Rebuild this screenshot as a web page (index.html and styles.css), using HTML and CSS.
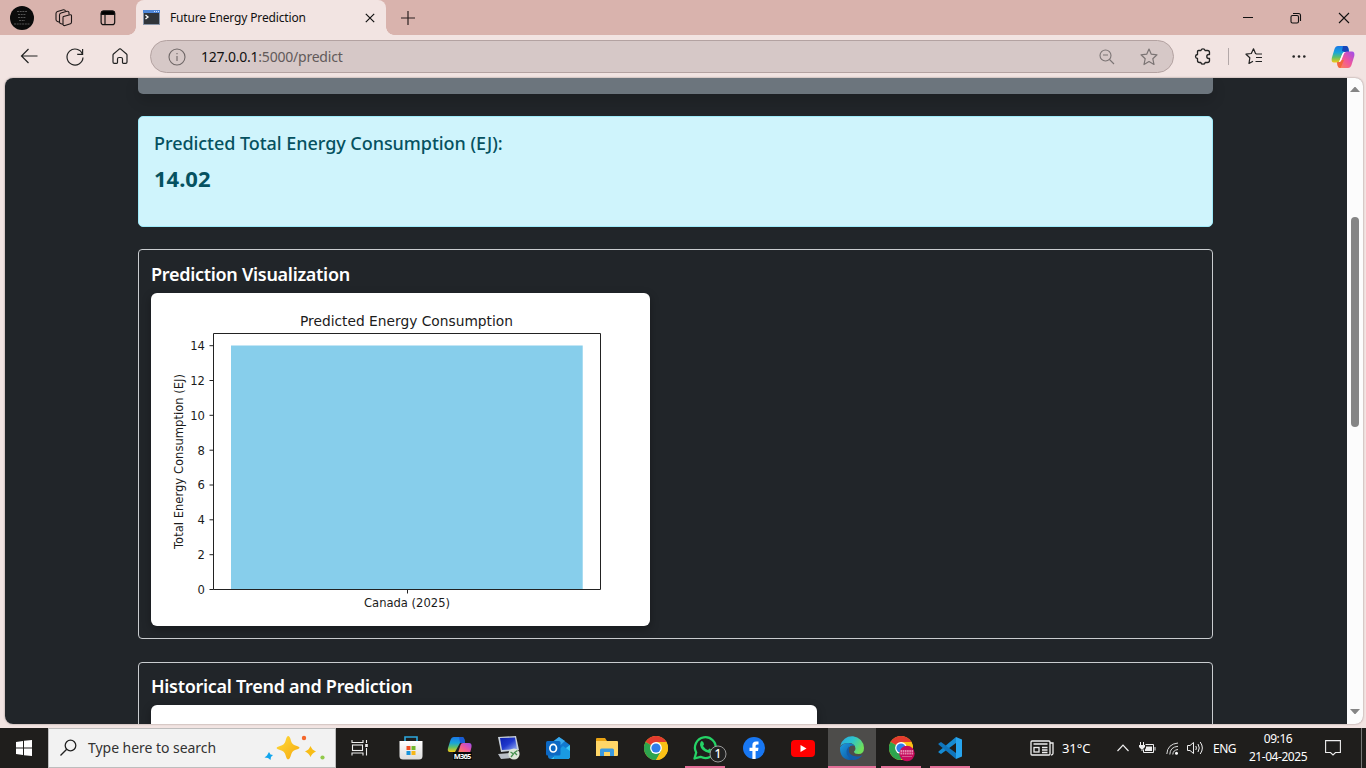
FILE: index.html
```html
<!DOCTYPE html>
<html lang="en">
<head>
<meta charset="utf-8">
<title>Future Energy Prediction</title>
<link rel="stylesheet" href="styles.css">
</head>
<body>
<svg class="defs" width="0" height="0">
  <defs>
    <linearGradient id="cpA" x1="0" y1="0" x2="0" y2="1"><stop offset="0" stop-color="#1b78e8"/><stop offset=".4" stop-color="#18a5d8"/><stop offset=".68" stop-color="#5fc06a"/><stop offset="1" stop-color="#f5c911"/></linearGradient>
    <linearGradient id="cpB" x1="1" y1="0" x2="0" y2="1"><stop offset="0" stop-color="#9a4df0"/><stop offset=".5" stop-color="#f0569c"/><stop offset="1" stop-color="#ff8a4a"/></linearGradient>
    <linearGradient id="edA" x1="0" y1="0" x2="1" y2=".5"><stop offset="0" stop-color="#2aa8e0"/><stop offset=".5" stop-color="#2cc3cf"/><stop offset="1" stop-color="#6fe05a"/></linearGradient>
    <linearGradient id="edB" x1="0" y1="0" x2="1" y2="1"><stop offset="0" stop-color="#1c9ce0"/><stop offset="1" stop-color="#0c4f9c"/></linearGradient>
    <linearGradient id="gold" x1="0" y1="0" x2="1" y2="1"><stop offset="0" stop-color="#ffdc3c"/><stop offset="1" stop-color="#f5a80c"/></linearGradient>
    <linearGradient id="bag" x1="0" y1="0" x2="0" y2="1"><stop offset="0" stop-color="#fff"/><stop offset="1" stop-color="#dcdcdc"/></linearGradient>
    <linearGradient id="pc" x1="0" y1="0" x2="1" y2="1"><stop offset="0" stop-color="#0b1fae"/><stop offset=".5" stop-color="#2038cc"/><stop offset="1" stop-color="#9cb6f4"/></linearGradient>
    <symbol id="chrome" viewBox="0 0 24 24">
      <circle cx="12" cy="12" r="12" fill="#fbc116"/>
      <path d="M12 12 1.600 6A12 12 0 0 1 22.400 6Z" fill="#e33b2e"/>
      <path d="M12 12 1.600 6A12 12 0 0 0 12 24L17.200 15Z" fill="#2da44e"/>
      <path d="M12 6H22.400A12 12 0 0 1 12 24L17.200 15Z" fill="#fbc116"/>
      <circle cx="12" cy="12" r="5.900" fill="#fff"/><circle cx="12" cy="12" r="4.600" fill="#2f7de9"/>
    </symbol>
  </defs>
</svg>
<div class="screen">
  <header class="titlebar">
    <div class="avatar"><svg width="24" height="24"><circle cx="12" cy="12" r="12" fill="#0b0b0b"/><g stroke="#9a9a9a" stroke-width="1" stroke-dasharray="2 .7"><path d="M7 5.500H17M8 8.500H16M8 11.500H16M9 14.500H15M4 18H20" opacity=".5"/></g></svg></div>
    <div class="tb-icon workspaces"><svg width="18" height="18" fill="none" stroke="#1d1717" stroke-width="1.100" stroke-linejoin="round"><path d="M8.500 7.500 15 5.700Q16.500 5.500 16.500 7V13Q16.500 14.500 15.500 14.800L10 16.500Q8 17 8 15V8.500Q8 7.700 8.500 7.500Z"/><path d="M8 15.300 6 14.700Q4.500 14.500 4.500 13V6Q4.500 4.500 6 4L12 2.300Q14 2 14 4V5.500"/><path d="M4.500 13.200 2.500 12.500Q1 12 1 10.500V4.500Q1 3 2.500 2.500L8.500.7Q10 .5 10.500 2.200"/></svg></div>
    <div class="tb-icon verticals"><svg width="16" height="16" fill="none" stroke="#111" stroke-width="1.200"><rect x="1.100" y="1.100" width="13.600" height="13.600" rx="2.500"/><path d="M1.500 4.500V3Q1.500 1 3.500 1H12.500Q14.500 1 14.500 3V4.500Z" fill="#000"/><path d="M5 5V14.500"/></svg></div>
    <div class="tab">
      <svg class="favicon" width="17" height="15"><rect width="17" height="15" fill="#8995a8"/><rect width="17" height="3" fill="#4f87d8"/><path d="M11 1.500H16" stroke="#d6e6ff" stroke-dasharray="1 1"/><rect x="1" y="3" width="15" height="11" fill="#30353b"/><path d="M2.500 5 5 7 2.500 9" fill="none" stroke="#fff" stroke-width="1.300"/></svg>
      <span class="tab-title">Future Energy Prediction</span>
      <svg class="tab-close" width="10" height="10" stroke="#111" stroke-width="1.200"><path d="M.8.8 9.200 9.200M9.200.8.8 9.200"/></svg>
    </div>
    <svg class="newtab" width="14" height="14" stroke="#2a2020" stroke-width="1.200"><path d="M7 0V14M0 7H14"/></svg>
    <div class="winctl">
      <svg width="48" height="35" stroke="#111"><path d="M20 17.500H30"/></svg>
      <svg width="48" height="35" fill="none" stroke="#111" stroke-width="1.100"><rect x="20" y="15.500" width="7.500" height="7.500" rx="1.500"/><path d="M22 13.500H27.500Q29.500 13.500 29.500 15.500V21"/></svg>
      <svg width="48" height="35" stroke="#111" stroke-width="1.100"><path d="M20 13 30 23M30 13 20 23"/></svg>
    </div>
  </header>
  <nav class="toolbar">
    <div class="cell46"><svg width="18" height="16" fill="none" stroke="#222" stroke-width="1.200"><path d="M17.500 7H1.500M8.500 0 1.500 7 8.500 14"/></svg></div>
    <div class="cell46"><svg width="18" height="18" fill="none" stroke="#222" stroke-width="1.200"><path d="M16.500 6.200A8 8 0 1 0 17 9.500M16.600 1V6.300H11.200"/></svg></div>
    <div class="cell44"><svg width="16" height="17" fill="none" stroke="#222" stroke-width="1.200" stroke-linejoin="round"><path d="M1 7.100Q1 6.500 1.500 6L7.200 1.100Q8 .5 8.800 1.100L14.500 6Q15 6.500 15 7.100V14Q15 15.300 13.700 15.300H11.300Q10.500 15.300 10.500 14.500V11Q10.500 9.500 9 9.500H7Q5.500 9.500 5.500 11V14.500Q5.500 15.300 4.700 15.300H2.300Q1 15.300 1 14Z"/></svg></div>
    <div class="pill">
      <svg class="info" width="18" height="18" fill="none" stroke="#6f6767" stroke-width="1.100"><circle cx="9" cy="9" r="8"/><path d="M9 8V13M9 5V6.300"/></svg>
      <span class="url"><b>127.0.0.1</b>:5000/predict</span>
      <svg class="zoomout" width="16" height="16" fill="none" stroke="#7b7474" stroke-width="1.100"><circle cx="6.500" cy="6.500" r="5.500"/><path d="M4 6H9M10.500 10.500 15 15"/></svg>
      <svg class="star" width="18" height="18" fill="none" stroke="#7b7474" stroke-width="1.200" stroke-linejoin="round"><path d="M9 1 11.300 6.200 17 6.800 12.800 10.700 14 16.500 9 13.600 4 16.500 5.200 10.700 1 6.800 6.700 6.200Z"/></svg>
    </div>
    <div class="cell30 ext"><svg width="18" height="18" fill="none" stroke="#222" stroke-width="1.300" stroke-linejoin="round"><path d="M4.500 2.500H7Q7.300.8 9 .8T11 2.500H13.500Q15.500 2.500 15.500 4.500V6.500H14.700Q12.800 6.500 12.800 8.500T14.700 10.500H15.500V12.500Q15.500 14.500 13.500 14.500H11.200Q10.800 16.200 9 16.200T6.800 14.500H5.500Q3.500 14.500 3.500 12.500V10.500Q1.500 10.200 1.500 8.500T3.500 6.500V3.500Q3.500 2.500 4.500 2.500Z"/></svg></div>
    <i class="sep"></i>
    <div class="cell30 fav"><svg width="19" height="18" fill="none" stroke="#222" stroke-width="1.200" stroke-linejoin="round"><path d="M11.500 6 10.500 5.500 8.500 .8 6.300 5.500 1 6.200 4.800 9.800 4 15.500 8 13.300M11 6H17M11 9.500H17M10.500 13.500H17"/></svg></div>
    <div class="cell30 dots"><svg width="14" height="4" fill="#222"><circle cx="1.700" cy="1.500" r="1.300"/><circle cx="7" cy="1.500" r="1.300"/><circle cx="12.300" cy="1.500" r="1.300"/></svg></div>
    <div class="cell30 copilot"><svg width="24" height="22" viewBox="0 0 24 22"><path d="M7 0H15Q17 0 17.500 3L18 6H14Q12 6 11.300 8L8.500 15Q8 16.500 6 16.500H3Q0 16.500.8 12L3.500 3Q4.500 0 7 0Z" fill="url(#cpA)"/><path d="M12 0H15Q17 0 17.500 3L18 6H14L11 5Z" fill="#1645b8"/><path d="M17 22H9Q7 22 6.500 19L6 16Q9 17 10 14L12.800 7Q13.500 5.500 16 5.500H21Q24 5.500 23.300 10L20.500 19Q19.500 22 17 22Z" fill="url(#cpB)"/><path d="M6 16Q9 17 10 14L13 14 9.500 22Q7 22 6.500 19Z" fill="#f2663c"/><path d="M11.300 8Q12 6 14 6H15Q13.300 6.500 12.800 8L10.500 14Q10 16 8 16Z" fill="#fff"/></svg></div>
  </nav>
  <main class="viewport">
    <div class="page">
      <div class="container">
        <div class="form-card"></div>
        <div class="alert">
          <h4 class="alert-title">Predicted Total Energy Consumption (EJ):</h4>
          <p class="value">14.02</p>
        </div>
        <section class="panel first">
          <h5 class="heading">Prediction Visualization</h5>
          <svg class="plot" width="499" height="333" viewBox="151 293 499 333">
            <rect x="231" y="345.500" width="351.700" height="244.500" fill="#87ceeb"/>
            <path d="M213.500 333.500H600.500V589.500H213.500ZM209.500 589.500H213.500M209.500 554.700H213.500M209.500 519.800H213.500M209.500 485H213.500M209.500 450.200H213.500M209.500 415.300H213.500M209.500 380.500H213.500M209.500 345.700H213.500M407.500 589.500V593.500" fill="none" stroke="#222" stroke-width="1"/>
            <g class="ticks">
              <text x="205" y="594">0</text><text x="205" y="559">2</text><text x="205" y="524">4</text><text x="205" y="489">6</text><text x="205" y="454.500">8</text><text x="205" y="419.500">10</text><text x="205" y="384.500">12</text><text x="205" y="350">14</text>
            </g>
            <text class="mid" x="407" y="607" textLength="86" lengthAdjust="spacingAndGlyphs">Canada (2025)</text>
            <text class="plot-title" x="406.500" y="326" textLength="213" lengthAdjust="spacingAndGlyphs">Predicted Energy Consumption</text>
            <text class="mid" transform="translate(182.500 461.500) rotate(-90)" textLength="175" lengthAdjust="spacingAndGlyphs">Total Energy Consumption (EJ)</text>
          </svg>
        </section>
        <section class="panel second">
          <h5 class="heading">Historical Trend and Prediction</h5>
          <div class="plot-next"></div>
        </section>
      </div>
    </div>
    <div class="scrollbar"><svg width="10" height="6"><path d="M0 6 4.500 1H5.500L10 6Z" fill="#858585"/></svg><i class="thumb"></i><svg class="down" width="10" height="6"><path d="M0 0 4.500 5H5.500L10 0Z" fill="#858585"/></svg></div>
  </main>
  <footer class="taskbar">
    <div class="start"><svg width="16" height="16" fill="#fff"><path d="M0 2 7 1V7.500H0ZM8 .8 16 0V7.500H8ZM0 8.500H7V15L0 14ZM8 8.500H16V16L8 15.200Z"/></svg></div>
    <div class="search">
      <svg width="18" height="18" fill="none" stroke="#222" stroke-width="1.300"><circle cx="10.500" cy="6.500" r="5.300"/><path d="M6.700 10.300.5 16.500"/></svg>
      <span class="search-text">Type here to search</span>
      <svg class="sparkles" width="62" height="26"><path d="M24 1Q26 1 27 6Q28 10 33 11Q36 12 35.500 13Q35 14 31 15Q28 16 27 20Q26 24 24 24.500Q22.500 24 21.500 20Q20.500 16 16 15Q12.500 14 12.500 13Q12.500 12 16 11Q20.500 10 21.500 6Q22.500 1.500 24 1Z" fill="url(#gold)"/><path d="M46.500 11Q48 15 52 16.500Q48 18 46.500 22Q45 18 41 16.500Q45 15 46.500 11Z" fill="#f8bd16"/><path d="M5 17 6.500 19.500 9 20 7 22 6.500 25 4 23 .5 22.500 3 20.500Z" fill="#12a5ed"/><circle cx="40" cy="3" r="2.200" fill="#f4672b"/><circle cx="58.500" cy="22.500" r="2.100" fill="#91c94a"/></svg>
    </div>
    <div class="task"><svg width="18" height="16" fill="none" stroke="#eee" stroke-width="1.100"><path d="M1 0V2.500H12V0M1 15.500V13H12V15.500M15.500 0V3M15.500 8V15.500"/><rect x="1.500" y="5" width="10" height="5.500"/><rect x="14.200" y="4" width="2.600" height="3" fill="#eee" stroke="none"/></svg></div>
    <div class="apps">
      <div class="app"><svg width="24" height="24"><path d="M6 6V1H18V6" fill="none" stroke="#2da8dd" stroke-width="1.600"/><path d="M.5 5H23.500V20Q23.500 23.500 20 23.500H4Q.5 23.500.5 20Z" fill="url(#bag)"/><path d="M7.500 10H11.500V14H7.500Z" fill="#f04e23"/><path d="M12.500 10H16.500V14H12.500Z" fill="#71b72c"/><path d="M7.500 15H11.500V19H7.500Z" fill="#1793db"/><path d="M12.500 15H16.500V19H12.500Z" fill="#f7b718"/></svg></div>
      <div class="app"><svg width="26" height="24"><path d="M7 1H15Q17 1 17.500 4L18 7H13L8 16H3Q0 16 1 12L3.500 4Q4.500 1 7 1Z" fill="url(#cpA)"/><path d="M12 1H15Q17 1 17.500 4L18 7H13Z" fill="#195bd5"/><path d="M16 7H22Q25 7 24.500 11L23 17H11L13.500 9Q14 7 16 7Z" fill="url(#cpB)"/><rect x="6" y="16" width="19" height="8" fill="#080808"/><text class="m365" x="6.700" y="22.500" textLength="17.500">M365</text></svg></div>
      <div class="app"><svg width="24" height="24"><path d="M1 18 13 17 18 19 15 22 4 23Z" fill="#b9bec5"/><path d="M1 1 19 0 22 14 4 16Z" fill="#c8d0da"/><path d="M3 2 18 1.500 20 13 5 14Z" fill="url(#pc)"/><circle cx="17" cy="18" r="5.600" fill="#dde7d9"/><path d="M13.500 16 16.500 18 14 21M20.500 14.500 17.500 16.500 20 19" fill="none" stroke="#45904e" stroke-width="1.300"/></svg></div>
      <div class="app"><svg width="24" height="24"><path d="M2 9 13 1 24 9V20Q24 23 21 23H5Q2 23 2 20Z" fill="#1279cf"/><path d="M13 1 19 5 9 14 3 9Z" fill="#38a9ed"/><path d="M24 9V20Q24 23 21 23H5L24 9Z" fill="#3cc7f4"/><path d="M8 18 17 10 24 15V20Q24 23 21 23H8Z" fill="#1a9ae2"/><rect y="5" width="14.500" height="14.500" rx="1.500" fill="#0c68c3"/><ellipse cx="7.200" cy="12.200" rx="3.300" ry="3.800" fill="none" stroke="#fff" stroke-width="1.700"/></svg></div>
      <div class="app"><svg width="22" height="20"><path d="M0 1Q0 0 1 0H9L11 3H0Z" fill="#e9a313"/><path d="M0 3H21Q22 3 22 4V17Q22 18 21 18H0Z" fill="#ffd667"/><path d="M4 18V12Q4 10.500 5.500 10.500H16.500Q18 10.500 18 12V18H14V14H8V18Z" fill="#3b9ae0"/></svg></div>
      <div class="app"><svg width="24" height="24"><use href="#chrome"/></svg></div>
      <div class="app open"><svg class="whatsapp" width="34" height="28"><path d="M1.500 24.500 3.200 18.500A10.400 10.400 0 1 1 7.500 22.800Z" fill="none" stroke="#25d366" stroke-width="2.300" stroke-linejoin="round"/><path d="M8 7.500Q9 6 10.500 8.500L11 10.500 10 12Q12 15 15 16L16.500 14.500 19 16Q19 19 16 19Q8 17 7 11Q7 8.500 8 7.500Z" fill="#25d366"/><circle cx="25" cy="20" r="8" fill="#222" stroke="#999"/><text class="badge" x="25" y="24">1</text></svg></div>
      <div class="app"><svg width="22" height="22"><circle cx="11" cy="11" r="11" fill="#1877f2"/><path d="M9.400 22V14H6.500V10.800H9.400V8.200Q9.400 4.500 13 4.500H15.500V7.500H14Q12.600 7.500 12.600 9V10.800H15.500L15 14H12.600V22Z" fill="#fff"/></svg></div>
      <div class="app"><svg width="24" height="17"><rect width="24" height="17" rx="4" fill="#f00"/><path d="M9.500 5V12L15.500 8.500Z" fill="#fff"/></svg></div>
      <div class="app active"><svg width="24" height="24"><path d="M.2 10A12 12 0 0 1 24 12Q24 18 18.500 18Q14 18 14 15.500Q15.500 14.500 15.500 12.500Q15 7 8.500 7Q3 7 .2 10Z" fill="url(#edA)"/><path d="M.2 11Q3 7 8.500 7Q13 7.300 15 10Q11 8.500 8.500 12Q5 19 13 24Q0 25 0 12Z" fill="url(#edB)"/><path d="M9 12Q7.500 20 17 20.500Q20 20.500 22.500 19Q19 24 13 24Q6 21 6.500 15Q7 12.500 9 10.500Z" fill="#135ca9"/></svg></div>
      <div class="app open"><svg width="24" height="26"><use href="#chrome" width="24" height="24" x="0" y="1"/><circle cx="18" cy="18.500" r="7.700" fill="#c50c5c"/><path d="M11.500 16H24.500M11.500 18.500H24.500" stroke="#e588af" stroke-width="1.800" stroke-dasharray="1.600 .6"/><path d="M13 21.500H23" stroke="#dc6c9b" stroke-width=".8"/></svg></div>
      <div class="app open"><svg width="24" height="24"><path d="M18 1 24 3.500V20.500L18 23Z" fill="#27a5ef"/><path d="M18 1V7L3 18 .5 16.500V15.500Z" fill="#168bd2"/><path d="M3 6 .5 7.500V8.500L18 23V17Z" fill="#1076bd"/></svg></div>
    </div>
    <div class="tray">
      <svg class="news" width="24" height="16" fill="none" stroke="#eee" stroke-width="1.300"><rect x="1" y="1" width="19" height="14" rx="1"/><path d="M20 3H23V13.500Q23 15 21 15M3.500 4H17.500M12 7.500H17.500M12 10H17.500M12 12.500H17.500"/><rect x="4" y="7.500" width="5" height="4.500"/></svg>
      <span class="temp">31°C</span>
      <svg class="chev" width="12" height="8" fill="none" stroke="#eee" stroke-width="1.200"><path d="M.5 7 6 1.200 11.500 7"/></svg>
      <svg class="batt" width="17" height="13" fill="none" stroke="#eee"><path d="M6.500 2.500H14.500V10.500H4.500V7.500"/><path d="M7 4.500H13V9H6V7.500L7 6Z" fill="#eee" stroke="none"/><path d="M16 5V8.500M1.500 0V3M4.500 0V3M3 6V9"/><path d="M0 3H6V5L4 7H2L0 5Z" fill="#eee" stroke="none"/></svg>
      <svg class="wifi" width="13" height="13" fill="none" stroke="#ddd"><path d="M.8 12Q1.500 2 12 1M3.800 12.500Q4 5 12 4.300M6.800 12.500Q7 8 12 7.500"/><circle cx="10.500" cy="11.300" r="1.500" fill="#fff" stroke="none"/></svg>
      <svg class="vol" width="17" height="14" fill="none" stroke="#eee"><path d="M.5 4.500H3L6.500 1.500V12.500L3 9.500H.5ZM8.800 5Q10 7 8.800 9M11 3Q13.500 7 11 11M13.200 1Q17.500 7 13.200 13"/></svg>
      <span class="lang">ENG</span>
      <div class="clock"><span>09:16</span><span class="date">21-04-2025</span></div>
      <svg class="note" width="16" height="16" fill="none" stroke="#eee" stroke-width="1.100"><path d="M.6.6H15.400V12.500H10.500L8 15 5.500 12.500H.6Z"/></svg>
      <i class="peek"></i>
    </div>
  </footer>
</div>
</body>
</html>
```
FILE: styles.css
```css
* { box-sizing: border-box; }
body { margin: 0; font-family: "Noto Sans", "Open Sans", sans-serif; }
svg { display: block; flex: none; overflow: visible; }
.defs { position: absolute; }
.screen { width: 1366px; height: 768px; overflow: hidden; display: flex; flex-direction: column; background: #f2e4e2; }

.titlebar { height: 35px; background: #d9b3ad; display: flex; align-items: center; }
.avatar { width: 24px; margin-left: 10px; border-radius: 50%; }
.workspaces { margin-left: 21px; }
.verticals { margin-left: 27px; }
.tab { position: relative; width: 250px; height: 35px; margin-left: 20px; background: #f2e4e2; border-radius: 8px 8px 0 0; display: flex; align-items: center; padding-left: 7px; }
.tab::before, .tab::after { content: ""; position: absolute; bottom: 0; width: 8px; height: 8px; }
.tab::before { left: -8px; background: radial-gradient(circle at 0 0, transparent 7.5px, #f2e4e2 8px); }
.tab::after { right: -8px; background: radial-gradient(circle at 100% 0, transparent 7.5px, #f2e4e2 8px); }
.tab-title { margin-left: 10px; width: 195px; font-size: 12px; line-height: 35px; color: #111; white-space: nowrap; letter-spacing: -.15px; }
.newtab { margin-left: 15px; }
.winctl { margin-left: auto; display: flex; margin-right: -1px; }

.toolbar { height: 43px; padding-left: 6px; display: flex; align-items: center; }
.cell46, .cell44, .cell30 { display: flex; justify-content: center; align-items: center; }
.cell46 { width: 46px; }
.cell44 { width: 44px; }
.cell30 { width: 30px; }
.pill { width: 1024px; height: 33px; margin-left: 8px; border: 1px solid #b3a2a1; border-radius: 17px; background: #d6c8c7; display: flex; align-items: center; padding: 0 15px 0 17px; }
.url { margin-left: 15px; font-size: 14px; line-height: 30px; color: #625a5a; letter-spacing: -.22px; }
.url b { font-weight: 400; color: #111; }
.zoomout { margin-left: auto; }
.star { margin-left: 25px; }
.ext { margin-left: 14px; }
.sep { width: 1px; height: 17px; margin-left: 10px; background: #b3a8a8; }
.fav { margin-left: 10px; }
.dots { margin-left: 15px; }
.copilot { margin-left: 14px; }

.viewport { width: 1358px; height: 646px; margin-left: 5px; border-radius: 8px; overflow: hidden; display: flex; background: #fcfcfc; box-shadow: 0 0 2px #8d7d7c; }
.page { width: 1342px; background: #212529; padding-left: 133px; }
.container { width: 1075px; display: flex; flex-direction: column; }
.form-card { height: 16px; background: #6c757d; border-radius: 0 0 5px 5px; box-shadow: 0 7px 14px rgba(0,0,0,.15); }
.alert { height: 111px; margin-top: 22px; padding: 13px 15px; background: #cff4fc; border: 1px solid #9eeaf9; border-radius: 5px; color: #055160; }
.alert-title { margin: 0; font-size: 18px; line-height: 26px; font-weight: 500; letter-spacing: -.05px; }
.value { margin: 8px 0 0; font-size: 22px; line-height: 28px; font-weight: 700; }
.panel { border: 1px solid #c9cccf; border-radius: 4px; padding: 12px; }
.first { margin-top: 22px; height: 390px; }
.second { margin-top: 23px; height: 120px; padding-top: 11px; }
.heading { margin: 0 0 7px; font-size: 18px; line-height: 24px; font-weight: 600; color: #fff; letter-spacing: -.29px; white-space: nowrap; }
.plot { background: #fff; border-radius: 6px; box-shadow: 0 3px 10px rgba(0,0,0,.3); }
.plot text { font-family: "DejaVu Sans", sans-serif; font-size: 11.6px; fill: #1b1b1b; }
.ticks text { text-anchor: end; }
.plot .mid { text-anchor: middle; }
.plot .plot-title { text-anchor: middle; font-size: 14.2px; }
.plot-next { width: 666px; height: 60px; background: #fff; border-radius: 6px; box-shadow: 0 3px 10px rgba(0,0,0,.3); }
.scrollbar { width: 16px; display: flex; flex-direction: column; align-items: center; padding: 8px 0 9px; }
.thumb { width: 8px; height: 210px; margin-top: 125px; border-radius: 4px; background: #858585; }
.down { margin-top: auto; }

.taskbar { height: 40px; margin-top: 4px; background: #1f1e1c; display: flex; color: #fff; }
.start, .task, .app { width: 48px; height: 40px; display: flex; justify-content: center; align-items: center; }
.search { width: 288px; height: 40px; background: #f2f2f2; border: 1px solid #bdbdbd; display: flex; align-items: center; padding-left: 11px; }
.search-text { width: 160px; margin-left: 10px; font-size: 14px; line-height: 38px; color: #333; letter-spacing: -.04px; }
.sparkles { margin-left: 16px; }
.apps { display: flex; gap: 1px; margin-left: 3px; }
.m365 { font: 700 7.500px "Noto Sans", sans-serif; fill: #fff; }
.badge { font: 500 12px "Noto Sans", sans-serif; fill: #fff; text-anchor: middle; }
.open { background: linear-gradient(#e36f98, #e36f98) center bottom / 40px 2px no-repeat; }
.whatsapp { margin-left: 9px; }
.active { background: linear-gradient(#e36f98, #e36f98) center bottom / 48px 2px no-repeat #4d4c4a; }
.tray { display: flex; align-items: center; margin-left: auto; font-size: 12px; }
.temp { width: 31px; margin-left: 8px; font-size: 13px; letter-spacing: -.1px; white-space: nowrap; }
.chev { margin-left: 24px; }
.batt { margin-left: 10px; }
.wifi { margin-left: 10px; }
.vol { margin-left: 8px; }
.lang { width: 25px; margin-left: 9px; letter-spacing: -.5px; }
.clock { width: 64px; margin-left: 8px; display: flex; flex-direction: column; align-items: center; line-height: 18px; letter-spacing: -.45px; white-space: nowrap; }
.note { margin-left: 15px; }
.peek { width: 1px; height: 40px; margin: 0 4px 0 20px; background: #777; }
```
